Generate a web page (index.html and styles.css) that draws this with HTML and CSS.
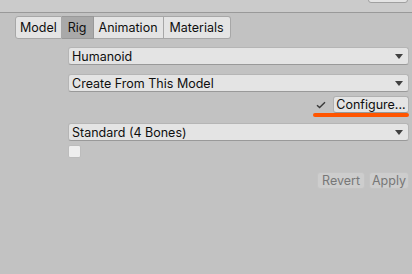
FILE: index.html
```html
<!DOCTYPE html>
<html>
<head>
<meta charset="utf-8">
<link rel="stylesheet" href="styles.css">
</head>
<body>
<div class="topbar"><div class="top-btn"></div></div>
<div class="panel">
  <div class="tabs">
    <div class="tab">Model</div>
    <div class="tab active">Rig</div>
    <div class="tab">Animation</div>
    <div class="tab">Materials</div>
  </div>
  <div class="fields">
    <div class="dropdown d1"><span>Humanoid</span><span class="arrow"></span></div>
    <div class="dropdown d2"><span>Create From This Model</span><span class="arrow"></span></div>
    <div class="configure-row">
      <svg class="check" width="10" height="8" viewBox="0 0 10 8"><path d="M1 4.2 L3.6 6.6 L9 1.2" fill="none" stroke="#3a3a3a" stroke-width="1.4"/></svg>
      <div class="btn configure">Configure...</div>
      <div class="underline"></div>
    </div>
    <div class="dropdown d3"><span>Standard (4 Bones)</span><span class="arrow"></span></div>
    <div class="checkbox"></div>
    <div class="actions">
      <div class="btn disabled revert">Revert</div>
      <div class="btn disabled apply">Apply</div>
    </div>
  </div>
</div>
</body>
</html>
```
FILE: styles.css
```css
html, body {
  margin: 0;
  padding: 0;
}
body {
  width: 412px;
  height: 274px;
  background: #c2c2c2;
  font-family: Inter, "Liberation Sans", sans-serif;
  font-size: 12.5px;
  color: #0f0f0f;
  overflow: hidden;
}
.topbar {
  height: 12px;
  background: #cbcbcb;
  border-bottom: 1px solid #999999;
  position: relative;
}
.top-btn {
  position: absolute;
  right: 4px;
  top: -3px;
  width: 40px;
  height: 6px;
  background: #e4e4e4;
  border: 1px solid #a0a0a0;
  border-radius: 3px;
  box-sizing: border-box;
}
.panel {
  padding-top: 3px;
}
.tabs {
  display: flex;
  margin-left: 15px;
  height: 23px;
}
.tab {
  background: #e4e4e4;
  border: 1px solid #a7a7a7;
  border-left: none;
  padding: 0 5px;
  display: flex;
  align-items: center;
  line-height: 21px;
}
.tab:first-child {
  border-left: 1px solid #a7a7a7;
  border-radius: 3px 0 0 3px;
  padding: 0 4px 0 4px;
}
.tab:last-child {
  border-radius: 0 3px 3px 0;
  padding: 0 6px;
}
.tab.active {
  background: #a9a9a9;
  border-color: #999999;
  padding: 0 6px;
}
.fields {
  margin-left: 68px;
  margin-right: 3px;
  display: flex;
  flex-direction: column;
}
.dropdown {
  height: 18px;
  background: #e4e4e4;
  border: 1px solid #b5b5b5;
  border-bottom-color: #999999;
  border-radius: 3px;
  box-sizing: border-box;
  display: flex;
  align-items: center;
  justify-content: space-between;
  padding: 0 5px 0 3px;
}
.arrow {
  width: 0;
  height: 0;
  border-left: 4px solid transparent;
  border-right: 4px solid transparent;
  border-top: 5px solid #404040;
}
.d1 { margin-top: 8px; }
.d2 { margin-top: 9px; }
.configure-row {
  display: flex;
  justify-content: flex-end;
  align-items: center;
  margin-top: 4px;
  height: 17px;
  position: relative;
}
.check {
  margin-right: 7px;
  margin-top: 1px;
}
.btn {
  height: 17px;
  background: #e4e4e4;
  border: 1px solid #b0b0b0;
  border-bottom-color: #999999;
  border-radius: 3px;
  box-sizing: border-box;
  display: flex;
  align-items: center;
  justify-content: center;
  padding: 0 4px;
}
.configure {
  width: 76px;
}
.underline {
  position: absolute;
  right: 0;
  top: 17px;
  width: 96px;
  height: 4px;
  background: #ff5500;
  border-radius: 2px;
}
.d3 { margin-top: 10px; }
.checkbox {
  width: 13px;
  height: 13px;
  background: #eeeeee;
  border: 1px solid #bcbcbc;
  border-radius: 2px;
  box-sizing: border-box;
  margin-top: 4px;
}
.actions {
  display: flex;
  justify-content: flex-end;
  gap: 4px;
  margin-top: 14px;
}
.btn.disabled {
  background: #cdcdcd;
  border-color: #c4c4c4;
  color: #777777;
}
.revert { width: 48px; }
.apply { width: 40px; }
```
